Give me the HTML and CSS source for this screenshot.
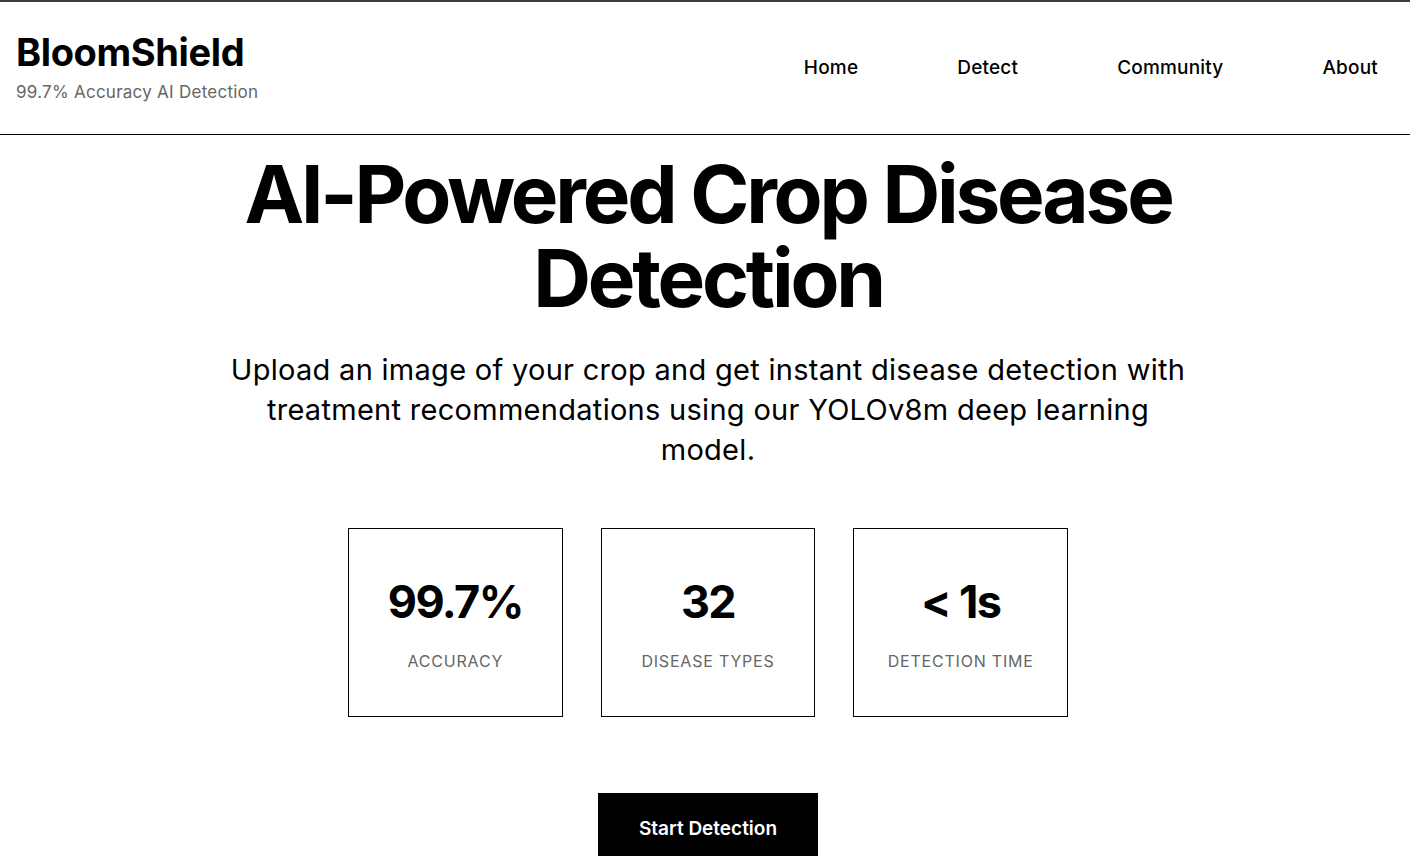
FILE: index.html
```html
<!DOCTYPE html>
<html lang="en">
<head>
<meta charset="utf-8">
<title>BloomShield</title>
<link rel="stylesheet" href="styles.css">
</head>
<body>
<header class="site-header">
  <div class="brand">
    <div class="brand-name">BloomShield</div>
    <div class="brand-tag">99.7% Accuracy AI Detection</div>
  </div>
  <nav class="nav">
    <a href="#" class="nav-link">Home</a>
    <a href="#" class="nav-link">Detect</a>
    <a href="#" class="nav-link">Community</a>
    <a href="#" class="nav-link">About</a>
  </nav>
</header>
<main class="hero">
  <h1 class="hero-title">AI-Powered Crop Disease Detection</h1>
  <p class="hero-text">Upload an image of your crop and get instant disease detection with treatment recommendations using our YOLOv8m deep learning model.</p>
  <div class="stats">
    <div class="stat">
      <div class="stat-value">99.7%</div>
      <div class="stat-label">Accuracy</div>
    </div>
    <div class="stat">
      <div class="stat-value">32</div>
      <div class="stat-label">Disease Types</div>
    </div>
    <div class="stat">
      <div class="stat-value">&lt; 1s</div>
      <div class="stat-label">Detection Time</div>
    </div>
  </div>
  <a href="#" class="cta">Start Detection</a>
</main>
</body>
</html>
```
FILE: styles.css
```css
* { box-sizing: border-box; }
html, body { margin: 0; padding: 0; }
body {
  font-family: Inter, "Noto Sans", sans-serif;
  color: #000;
  background: #fff;
  border-top: 2px solid #3b3e39;
}
.site-header {
  display: flex;
  justify-content: space-between;
  align-items: center;
  padding: 28px 32px 30px 16px;
  border-bottom: 1px solid #000;
}
.brand-name {
  font-size: 38px;
  font-weight: 700;
  letter-spacing: -0.01em;
  line-height: 44px;
}
.brand-tag {
  font-size: 17px;
  color: #666;
  letter-spacing: 0.015em;
  line-height: 24px;
  margin-top: 6px;
}
.nav {
  display: flex;
  gap: 99px;
  margin-top: 1px;
}
.nav-link {
  font-size: 19px;
  font-weight: 500;
  letter-spacing: 0.01em;
  color: #000;
  text-decoration: none;
}
.hero {
  display: flex;
  flex-direction: column;
  align-items: center;
  text-align: center;
  padding: 17px 0 0 6px;
}
.hero-title {
  margin: 0;
  max-width: 1000px;
  font-size: 80px;
  font-weight: 700;
  line-height: 84px;
  letter-spacing: -0.04em;
}
.hero-text {
  margin: 30px 0 0;
  max-width: 960px;
  font-size: 29px;
  line-height: 40px;
  letter-spacing: 0.01em;
}
.stats {
  display: flex;
  gap: 38px;
  margin-top: 58px;
}
.stat {
  width: 214.7px;
  height: 189px;
  border: 1px solid #000;
  display: flex;
  flex-direction: column;
  align-items: center;
  justify-content: center;
  gap: 22px;
}
.stat-value {
  font-size: 45px;
  font-weight: 700;
  line-height: 54px;
  letter-spacing: -0.035em;
}
.stat-label {
  font-size: 16px;
  color: #666;
  text-transform: uppercase;
  letter-spacing: 0.05em;
  line-height: 20px;
}
.cta {
  margin-top: 76px;
  display: inline-block;
  background: #000;
  color: #fff;
  text-decoration: none;
  font-size: 19px;
  font-weight: 600;
  padding: 24px 40.5px;
  line-height: 24px;
}
```
